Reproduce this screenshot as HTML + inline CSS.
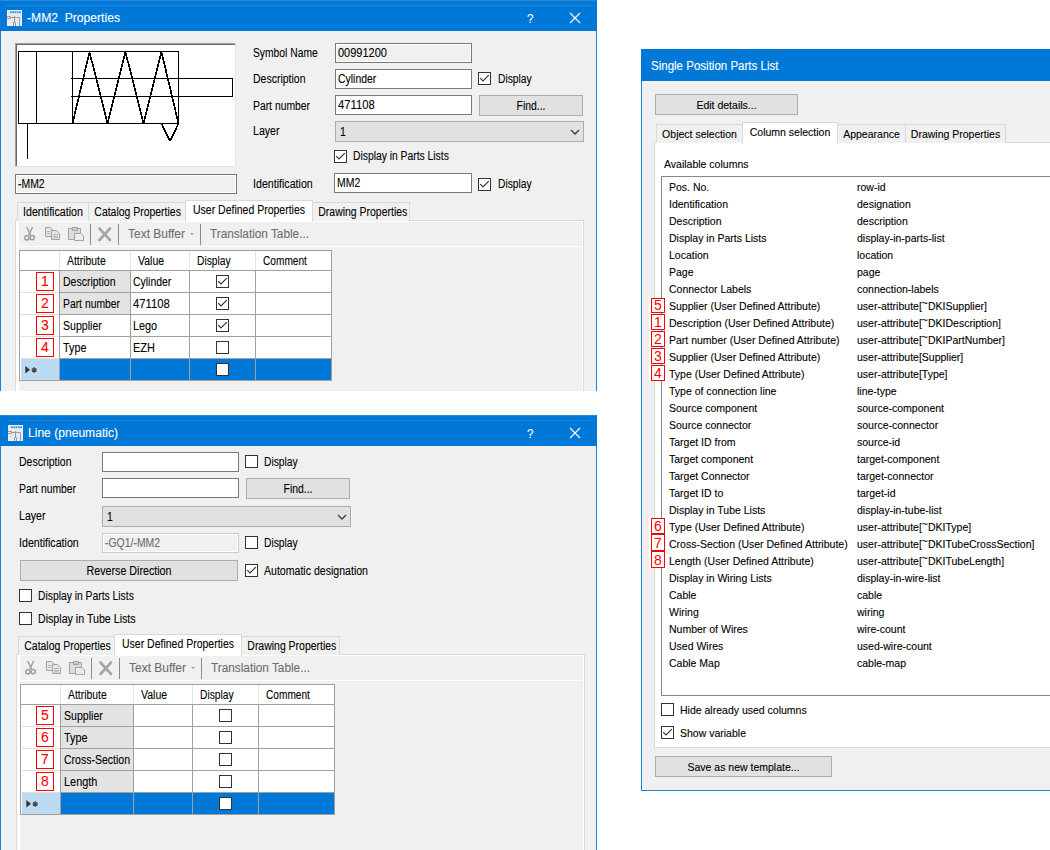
<!DOCTYPE html><html><head><meta charset="utf-8"><style>
html,body{margin:0;padding:0;}
body{width:1050px;height:850px;position:relative;overflow:hidden;background:#fff;font-family:"Liberation Sans",sans-serif;}
.t{position:absolute;white-space:nowrap;line-height:normal;-webkit-text-stroke:0.1px currentColor;}
</style></head><body>
<div style="position:absolute;left:0;top:0;width:597px;height:391px;overflow:hidden;">
<div style="position:absolute;left:0px;top:0px;width:597px;height:391px;background:#f0f0f0;"></div>
<div style="position:absolute;left:0px;top:0px;width:1px;height:391px;background:#1a82d9;"></div>
<div style="position:absolute;left:596px;top:0px;width:1px;height:391px;background:#1a82d9;"></div>
<div style="position:absolute;left:0px;top:0px;width:597px;height:31px;background:#0078d7;"></div>
<div style="position:absolute;left:1px;top:0px;width:595px;height:1px;background:#2a8ad8;"></div>
<div style="position:absolute;left:7px;top:5px;width:587px;height:1px;background:#1e88dd;"></div>
<svg style="position:absolute;left:7px;top:10px" width="15" height="16" viewBox="0 0 15 16">
<rect x="0" y="0" width="15" height="16" fill="#f2f0f4"/>
<rect x="1" y="1" width="13" height="14" fill="#e9e8ee"/>
<g fill="#2a9be0"><rect x="3" y="1.3" width="1.8" height="1.8"/><rect x="5.3" y="1.3" width="1.8" height="1.8"/><rect x="7.6" y="1.3" width="1.8" height="1.8"/><rect x="9.9" y="1.3" width="1.8" height="1.8"/><rect x="12.2" y="1.3" width="1.8" height="1.8"/></g>
<path d="M0 6.5 H3.5 V8.5 H0 M3.5 7.5 H12.5 V16 M7.5 6 V12.5 M6.5 16 V12.5 H8.5 V16" stroke="#9b9b9b" stroke-width="1" fill="none"/>
</svg>
<div class="t" style="left:27px;top:11px;font-size:12px;color:#fff;transform:scaleX(1.0105);transform-origin:0 0;">-MM2&nbsp; Properties</div>
<div class="t" style="left:527px;top:11px;font-size:13px;color:#fff;transform:scaleX(0.9000);transform-origin:0 0;">?</div>
<svg style="position:absolute;left:569px;top:12px" width="12" height="12"><path d="M1 1 L11 11 M11 1 L1 11" stroke="#fff" stroke-width="1.1"/></svg>
<div style="position:absolute;left:15px;top:43px;width:221px;height:124px;background:#fff;border-top:1px solid #a0a0a0;border-left:1px solid #a0a0a0;border-right:1px solid #e3e3e3;border-bottom:1px solid #e3e3e3;box-sizing:border-box;"></div>
<div style="position:absolute;left:16px;top:44px;width:219px;height:1px;background:#696969;"></div>
<div style="position:absolute;left:16px;top:44px;width:1px;height:122px;background:#696969;"></div>
<svg style="position:absolute;left:0;top:0" width="300" height="200">
<g stroke="#000" stroke-width="1" fill="none" shape-rendering="crispEdges">
<rect x="18.5" y="51.5" width="160" height="72"/>
<line x1="36.5" y1="51.5" x2="36.5" y2="123.5"/>
<line x1="72.5" y1="51.5" x2="72.5" y2="123.5"/>
<polyline points="71,78.5 232.5,78.5 232.5,96.5 71,96.5"/>
<line x1="27.5" y1="123.5" x2="27.5" y2="159"/>
</g>
<g stroke="#000" stroke-width="1.7" fill="none" shape-rendering="crispEdges" stroke-linejoin="bevel">
<polyline points="72.5,123.5 89.5,52 107.5,123.5 125.5,52 143.5,123.5 161.5,52 178.5,123.5"/>
<polyline points="161.5,123.5 170,141 178.5,123.5"/>
</g></svg>
<div style="position:absolute;left:15px;top:174px;width:220px;height:18px;border:1px solid #7a7a7a;background:#f0f0f0;box-shadow:inset 0 0 0 1px #fff;"></div>
<div class="t" style="left:18px;top:177px;font-size:12px;color:#000;transform:scaleX(0.8700);transform-origin:0 0;">-MM2</div>
<div class="t" style="left:253px;top:46px;font-size:12px;color:#000;transform:scaleX(0.8586);transform-origin:0 0;">Symbol Name</div>
<div class="t" style="left:253px;top:72px;font-size:12px;color:#000;transform:scaleX(0.8745);transform-origin:0 0;">Description</div>
<div class="t" style="left:253px;top:99px;font-size:12px;color:#000;transform:scaleX(0.8632);transform-origin:0 0;">Part number</div>
<div class="t" style="left:253px;top:124px;font-size:12px;color:#000;transform:scaleX(0.8824);transform-origin:0 0;">Layer</div>
<div class="t" style="left:253px;top:177px;font-size:12px;color:#000;transform:scaleX(0.8874);transform-origin:0 0;">Identification</div>
<div style="position:absolute;left:335px;top:43px;width:135px;height:18px;border:1px solid #7a7a7a;background:#f0f0f0;box-shadow:inset 0 0 0 1px #fff;"></div>
<div class="t" style="left:338px;top:46px;font-size:12px;color:#000;transform:scaleX(0.9159);transform-origin:0 0;">00991200</div>
<div style="position:absolute;left:335px;top:69px;width:135px;height:18px;border:1px solid #7a7a7a;background:#fff;"></div>
<div class="t" style="left:338px;top:72px;font-size:12px;color:#000;transform:scaleX(0.8701);transform-origin:0 0;">Cylinder</div>
<div style="position:absolute;left:478px;top:72px;width:11px;height:11px;border:1px solid #333;background:#fff;"></div>
<svg style="position:absolute;left:478px;top:72px" width="13" height="13"><polyline points="2.2,6.2 5,9 10.8,3.2" fill="none" stroke="#333" stroke-width="1.2"/></svg>
<div class="t" style="left:498px;top:72px;font-size:12px;color:#000;transform:scaleX(0.8562);transform-origin:0 0;">Display</div>
<div style="position:absolute;left:335px;top:95px;width:135px;height:18px;border:1px solid #7a7a7a;background:#fff;"></div>
<div class="t" style="left:338px;top:98px;font-size:12px;color:#000;transform:scaleX(0.9398);transform-origin:0 0;">471108</div>
<div style="position:absolute;left:479px;top:95px;width:102px;height:19px;border:1px solid #adadad;background:#e1e1e1;"></div>
<div class="t" style="left:479px;top:99px;font-size:12px;color:#000;width:104px;text-align:center;transform:scaleX(0.8663);transform-origin:50% 0;">Find...</div>
<div style="position:absolute;left:335px;top:121px;width:247px;height:19px;border:1px solid #adadad;background:#e1e1e1;"></div>
<div class="t" style="left:340px;top:125px;font-size:12px;color:#000;transform:scaleX(0.8700);transform-origin:0 0;">1</div>
<svg style="position:absolute;left:569px;top:127px" width="12" height="10"><polyline points="2,3 6,7 10,3" fill="none" stroke="#3a3a3a" stroke-width="1.25"/></svg>
<div style="position:absolute;left:334px;top:150px;width:11px;height:11px;border:1px solid #333;background:#fff;"></div>
<svg style="position:absolute;left:334px;top:150px" width="13" height="13"><polyline points="2.2,6.2 5,9 10.8,3.2" fill="none" stroke="#333" stroke-width="1.2"/></svg>
<div class="t" style="left:353px;top:149px;font-size:12px;color:#000;transform:scaleX(0.8602);transform-origin:0 0;">Display in Parts Lists</div>
<div style="position:absolute;left:334px;top:173px;width:136px;height:18px;border:1px solid #7a7a7a;background:#fff;"></div>
<div class="t" style="left:337px;top:176px;font-size:12px;color:#000;transform:scaleX(0.8700);transform-origin:0 0;">MM2</div>
<div style="position:absolute;left:478px;top:178px;width:11px;height:11px;border:1px solid #333;background:#fff;"></div>
<svg style="position:absolute;left:478px;top:178px" width="13" height="13"><polyline points="2.2,6.2 5,9 10.8,3.2" fill="none" stroke="#333" stroke-width="1.2"/></svg>
<div class="t" style="left:498px;top:177px;font-size:12px;color:#000;transform:scaleX(0.8562);transform-origin:0 0;">Display</div>
<div style="position:absolute;left:15px;top:220px;width:569px;height:200px;background:#fff;border:1px solid #d9d9d9;box-sizing:border-box;"></div>
<div style="position:absolute;left:19px;top:222px;width:563px;height:200px;background:#f0f0f0;"></div>
<div style="position:absolute;left:17px;top:202px;width:70px;height:18px;border:1px solid #d9d9d9;border-bottom:none;background:#f0f0f0;"></div>
<div class="t" style="left:17px;top:205px;font-size:12px;color:#000;width:72px;text-align:center;transform:scaleX(0.8903);transform-origin:50% 0;">Identification</div>
<div style="position:absolute;left:88px;top:202px;width:96px;height:18px;border:1px solid #d9d9d9;border-bottom:none;background:#f0f0f0;"></div>
<div class="t" style="left:88px;top:205px;font-size:12px;color:#000;width:98px;text-align:center;transform:scaleX(0.8703);transform-origin:50% 0;">Catalog Properties</div>
<div style="position:absolute;left:312px;top:202px;width:96px;height:18px;border:1px solid #d9d9d9;border-bottom:none;background:#f0f0f0;"></div>
<div class="t" style="left:312px;top:205px;font-size:12px;color:#000;width:98px;text-align:center;transform:scaleX(0.8721);transform-origin:50% 0;">Drawing Properties</div>
<div style="position:absolute;left:185px;top:200px;width:126px;height:21px;border:1px solid #d9d9d9;border-bottom:none;background:#fff;"></div>
<div class="t" style="left:185px;top:203px;font-size:12px;color:#000;width:128px;text-align:center;transform:scaleX(0.8746);transform-origin:50% 0;">User Defined Properties</div>
<div style="position:absolute;left:19px;top:246px;width:563px;height:1px;background:#fff;"></div>
<svg style="position:absolute;left:19px;top:222px" width="300" height="24">
<g fill="none" stroke="#9c9c9c" stroke-width="1.4">
<path d="M7.6 5 L11.6 13.2 M13.6 5 L9.6 13.2"/>
</g>
<circle cx="7.9" cy="15.8" r="2.1" fill="#f4f4f4" stroke="#9c9c9c" stroke-width="1.5"/>
<circle cx="13.2" cy="15.6" r="2.1" fill="#f4f4f4" stroke="#9c9c9c" stroke-width="1.5"/>
<g fill="#e6e6e6" stroke="#a3a3a3" stroke-width="1">
<path d="M26.5 5.5 H31.5 L34 8 V14.5 H26.5 Z"/>
<path d="M32.5 8.5 H37.5 L40.5 11.5 V17.5 H32.5 Z"/>
</g>
<g stroke="#b5b5b5" stroke-width="1"><path d="M28 9.5 H31 M28 11.5 H31 M34 12.5 H39 M34 14.5 H39 M34 16 H39"/></g>
<g fill="#dcdcdc" stroke="#a3a3a3" stroke-width="1">
<path d="M49.5 6.5 H61.5 V17.5 H49.5 Z"/>
<path d="M53.5 5.5 H58.5 V8.5 H53.5 Z" fill="#cfcfcf"/>
<path d="M55.5 11.5 H62 L64.5 14 V18.5 H55.5 Z" fill="#ececec"/>
</g>
<rect x="71" y="2" width="1" height="21" fill="#8c8c8c"/>
<path d="M80.5 6.5 L91 18 M91 6.5 L80.5 18" stroke="#a6a6a6" stroke-width="2.6" stroke-linecap="round"/>
<rect x="99" y="2" width="1" height="21" fill="#8c8c8c"/>
<path d="M171 11 L175 11 L173 13 Z" fill="#999"/>
<rect x="181" y="2" width="1" height="21" fill="#8c8c8c"/>
</svg>
<div class="t" style="left:128px;top:227px;font-size:12px;color:#6d6d6d;transform:scaleX(0.9975);transform-origin:0 0;">Text Buffer</div>
<div class="t" style="left:210px;top:227px;font-size:12px;color:#6d6d6d;transform:scaleX(0.9828);transform-origin:0 0;">Translation Table...</div>
<div style="position:absolute;left:19px;top:250px;width:313px;height:131px;background:#fff;border:1px solid #a0a0a0;box-sizing:border-box;"></div>
<div class="t" style="left:67px;top:254px;font-size:12px;color:#000;transform:scaleX(0.8657);transform-origin:0 0;">Attribute</div>
<div class="t" style="left:138px;top:254px;font-size:12px;color:#000;transform:scaleX(0.8755);transform-origin:0 0;">Value</div>
<div class="t" style="left:197px;top:254px;font-size:12px;color:#000;transform:scaleX(0.8562);transform-origin:0 0;">Display</div>
<div class="t" style="left:263px;top:254px;font-size:12px;color:#000;transform:scaleX(0.8440);transform-origin:0 0;">Comment</div>
<div style="position:absolute;left:59px;top:251px;width:1px;height:19px;background:#e5e5e5;"></div>
<div style="position:absolute;left:59px;top:270px;width:1px;height:111px;background:#a0a0a0;"></div>
<div style="position:absolute;left:130px;top:251px;width:1px;height:19px;background:#e5e5e5;"></div>
<div style="position:absolute;left:130px;top:270px;width:1px;height:111px;background:#a0a0a0;"></div>
<div style="position:absolute;left:189px;top:251px;width:1px;height:19px;background:#e5e5e5;"></div>
<div style="position:absolute;left:189px;top:270px;width:1px;height:111px;background:#a0a0a0;"></div>
<div style="position:absolute;left:255px;top:251px;width:1px;height:19px;background:#e5e5e5;"></div>
<div style="position:absolute;left:255px;top:270px;width:1px;height:111px;background:#a0a0a0;"></div>
<div style="position:absolute;left:19px;top:270px;width:313px;height:1px;background:#a0a0a0;"></div>
<div style="position:absolute;left:21px;top:292px;width:38px;height:1px;background:#e0e0e0;"></div>
<div style="position:absolute;left:59px;top:292px;width:273px;height:1px;background:#a0a0a0;"></div>
<div style="position:absolute;left:21px;top:314px;width:38px;height:1px;background:#e0e0e0;"></div>
<div style="position:absolute;left:59px;top:314px;width:273px;height:1px;background:#a0a0a0;"></div>
<div style="position:absolute;left:21px;top:336px;width:38px;height:1px;background:#e0e0e0;"></div>
<div style="position:absolute;left:59px;top:336px;width:273px;height:1px;background:#a0a0a0;"></div>
<div style="position:absolute;left:21px;top:358px;width:38px;height:1px;background:#e0e0e0;"></div>
<div style="position:absolute;left:59px;top:358px;width:273px;height:1px;background:#a0a0a0;"></div>
<div style="position:absolute;left:60px;top:271px;width:70px;height:21px;background:#e3e3e3;"></div>
<div style="position:absolute;left:36px;top:272px;width:16px;height:17px;border:1px solid #f00;"></div>
<div class="t" style="left:36px;top:272px;width:18px;height:19px;line-height:19px;text-align:center;font-size:14px;color:#f00;">1</div>
<div class="t" style="left:63px;top:275px;font-size:12px;color:#000;transform:scaleX(0.8745);transform-origin:0 0;">Description</div>
<div class="t" style="left:133px;top:275px;font-size:12px;color:#000;transform:scaleX(0.8701);transform-origin:0 0;">Cylinder</div>
<div style="position:absolute;left:216px;top:275px;width:11px;height:11px;border:1px solid #333;background:#fff;"></div>
<svg style="position:absolute;left:216px;top:275px" width="13" height="13"><polyline points="2.2,6.2 5,9 10.8,3.2" fill="none" stroke="#333" stroke-width="1.2"/></svg>
<div style="position:absolute;left:60px;top:293px;width:70px;height:21px;background:#e3e3e3;"></div>
<div style="position:absolute;left:36px;top:294px;width:16px;height:17px;border:1px solid #f00;"></div>
<div class="t" style="left:36px;top:294px;width:18px;height:19px;line-height:19px;text-align:center;font-size:14px;color:#f00;">2</div>
<div class="t" style="left:63px;top:297px;font-size:12px;color:#000;transform:scaleX(0.8632);transform-origin:0 0;">Part number</div>
<div class="t" style="left:133px;top:297px;font-size:12px;color:#000;transform:scaleX(0.9398);transform-origin:0 0;">471108</div>
<div style="position:absolute;left:216px;top:297px;width:11px;height:11px;border:1px solid #333;background:#fff;"></div>
<svg style="position:absolute;left:216px;top:297px" width="13" height="13"><polyline points="2.2,6.2 5,9 10.8,3.2" fill="none" stroke="#333" stroke-width="1.2"/></svg>
<div style="position:absolute;left:36px;top:316px;width:16px;height:17px;border:1px solid #f00;"></div>
<div class="t" style="left:36px;top:316px;width:18px;height:19px;line-height:19px;text-align:center;font-size:14px;color:#f00;">3</div>
<div class="t" style="left:63px;top:319px;font-size:12px;color:#000;transform:scaleX(0.8812);transform-origin:0 0;">Supplier</div>
<div class="t" style="left:133px;top:319px;font-size:12px;color:#000;transform:scaleX(0.9025);transform-origin:0 0;">Lego</div>
<div style="position:absolute;left:216px;top:319px;width:11px;height:11px;border:1px solid #333;background:#fff;"></div>
<svg style="position:absolute;left:216px;top:319px" width="13" height="13"><polyline points="2.2,6.2 5,9 10.8,3.2" fill="none" stroke="#333" stroke-width="1.2"/></svg>
<div style="position:absolute;left:36px;top:338px;width:16px;height:17px;border:1px solid #f00;"></div>
<div class="t" style="left:36px;top:338px;width:18px;height:19px;line-height:19px;text-align:center;font-size:14px;color:#f00;">4</div>
<div class="t" style="left:63px;top:341px;font-size:12px;color:#000;transform:scaleX(0.8995);transform-origin:0 0;">Type</div>
<div class="t" style="left:133px;top:341px;font-size:12px;color:#000;transform:scaleX(0.9125);transform-origin:0 0;">EZH</div>
<div style="position:absolute;left:216px;top:341px;width:11px;height:11px;border:1px solid #333;background:#fff;"></div>
<div style="position:absolute;left:21px;top:359px;width:38px;height:21px;background:#bcdaf2;"></div>
<div style="position:absolute;left:60px;top:359px;width:271px;height:21px;background:#0078d7;"></div>
<div style="position:absolute;left:130px;top:359px;width:1px;height:21px;background:#a0a0a0;"></div>
<div style="position:absolute;left:189px;top:359px;width:1px;height:21px;background:#a0a0a0;"></div>
<div style="position:absolute;left:255px;top:359px;width:1px;height:21px;background:#a0a0a0;"></div>
<div style="position:absolute;left:216px;top:363px;width:11px;height:11px;border:1px solid #333;background:#fff;"></div>
<svg style="position:absolute;left:25px;top:366px" width="14" height="9"><path d="M0.3 0 L5 3.8 L0.3 7.6 Z" fill="#333"/><path d="M9.2 1.2 V6.8 M6.8 2.6 L11.6 5.4 M11.6 2.6 L6.8 5.4" stroke="#444" stroke-width="1.4"/></svg>
</div>
<div style="position:absolute;left:0;top:415px;width:597px;height:435px;overflow:hidden;">
</div>
<div style="position:absolute;left:0px;top:415px;width:597px;height:435px;background:#f0f0f0;"></div>
<div style="position:absolute;left:0px;top:415px;width:1px;height:435px;background:#1a82d9;"></div>
<div style="position:absolute;left:596px;top:415px;width:1px;height:435px;background:#1a82d9;"></div>
<div style="position:absolute;left:0px;top:415px;width:597px;height:31px;background:#0078d7;"></div>
<div style="position:absolute;left:1px;top:415px;width:595px;height:1px;background:#2a8ad8;"></div>
<div style="position:absolute;left:8px;top:420px;width:586px;height:1px;background:#1e88dd;"></div>
<svg style="position:absolute;left:8px;top:425px" width="15" height="16" viewBox="0 0 15 16">
<rect x="0" y="0" width="15" height="16" fill="#f2f0f4"/>
<rect x="1" y="1" width="13" height="14" fill="#e9e8ee"/>
<g fill="#2a9be0"><rect x="3" y="1.3" width="1.8" height="1.8"/><rect x="5.3" y="1.3" width="1.8" height="1.8"/><rect x="7.6" y="1.3" width="1.8" height="1.8"/><rect x="9.9" y="1.3" width="1.8" height="1.8"/><rect x="12.2" y="1.3" width="1.8" height="1.8"/></g>
<path d="M0 6.5 H3.5 V8.5 H0 M3.5 7.5 H12.5 V16 M7.5 6 V12.5 M6.5 16 V12.5 H8.5 V16" stroke="#9b9b9b" stroke-width="1" fill="none"/>
</svg>
<div class="t" style="left:28px;top:426px;font-size:12px;color:#fff;transform:scaleX(1.0068);transform-origin:0 0;">Line (pneumatic)</div>
<div class="t" style="left:527px;top:426px;font-size:13px;color:#fff;transform:scaleX(0.9000);transform-origin:0 0;">?</div>
<svg style="position:absolute;left:569px;top:427px" width="12" height="12"><path d="M1 1 L11 11 M11 1 L1 11" stroke="#fff" stroke-width="1.1"/></svg>
<div class="t" style="left:19px;top:455px;font-size:12px;color:#000;transform:scaleX(0.8745);transform-origin:0 0;">Description</div>
<div class="t" style="left:19px;top:482px;font-size:12px;color:#000;transform:scaleX(0.8632);transform-origin:0 0;">Part number</div>
<div class="t" style="left:19px;top:509px;font-size:12px;color:#000;transform:scaleX(0.8824);transform-origin:0 0;">Layer</div>
<div class="t" style="left:19px;top:536px;font-size:12px;color:#000;transform:scaleX(0.8874);transform-origin:0 0;">Identification</div>
<div style="position:absolute;left:102px;top:452px;width:135px;height:18px;border:1px solid #7a7a7a;background:#fff;"></div>
<div style="position:absolute;left:245px;top:455px;width:11px;height:11px;border:1px solid #333;background:#fff;"></div>
<div class="t" style="left:264px;top:455px;font-size:12px;color:#000;transform:scaleX(0.8562);transform-origin:0 0;">Display</div>
<div style="position:absolute;left:102px;top:478px;width:135px;height:18px;border:1px solid #7a7a7a;background:#fff;"></div>
<div style="position:absolute;left:246px;top:478px;width:102px;height:19px;border:1px solid #adadad;background:#e1e1e1;"></div>
<div class="t" style="left:246px;top:482px;font-size:12px;color:#000;width:104px;text-align:center;transform:scaleX(0.8663);transform-origin:50% 0;">Find...</div>
<div style="position:absolute;left:102px;top:506px;width:247px;height:19px;border:1px solid #adadad;background:#e1e1e1;"></div>
<div class="t" style="left:107px;top:510px;font-size:12px;color:#000;transform:scaleX(0.8700);transform-origin:0 0;">1</div>
<svg style="position:absolute;left:336px;top:512px" width="12" height="10"><polyline points="2,3 6,7 10,3" fill="none" stroke="#3a3a3a" stroke-width="1.25"/></svg>
<div style="position:absolute;left:102px;top:533px;width:135px;height:18px;border:1px solid #cccccc;background:#f0f0f0;box-shadow:inset 0 0 0 1px #fff;"></div>
<div class="t" style="left:105px;top:536px;font-size:12px;color:#6d6d6d;transform:scaleX(0.8700);transform-origin:0 0;">-GQ1/-MM2</div>
<div style="position:absolute;left:245px;top:536px;width:11px;height:11px;border:1px solid #333;background:#fff;"></div>
<div class="t" style="left:264px;top:536px;font-size:12px;color:#000;transform:scaleX(0.8562);transform-origin:0 0;">Display</div>
<div style="position:absolute;left:20px;top:560px;width:216px;height:19px;border:1px solid #adadad;background:#e1e1e1;"></div>
<div class="t" style="left:20px;top:564px;font-size:12px;color:#000;width:218px;text-align:center;transform:scaleX(0.8912);transform-origin:50% 0;">Reverse Direction</div>
<div style="position:absolute;left:245px;top:564px;width:11px;height:11px;border:1px solid #333;background:#fff;"></div>
<svg style="position:absolute;left:245px;top:564px" width="13" height="13"><polyline points="2.2,6.2 5,9 10.8,3.2" fill="none" stroke="#333" stroke-width="1.2"/></svg>
<div class="t" style="left:264px;top:564px;font-size:12px;color:#000;transform:scaleX(0.8808);transform-origin:0 0;">Automatic designation</div>
<div style="position:absolute;left:19px;top:589px;width:11px;height:11px;border:1px solid #333;background:#fff;"></div>
<div class="t" style="left:38px;top:589px;font-size:12px;color:#000;transform:scaleX(0.8602);transform-origin:0 0;">Display in Parts Lists</div>
<div style="position:absolute;left:19px;top:612px;width:11px;height:11px;border:1px solid #333;background:#fff;"></div>
<div class="t" style="left:38px;top:612px;font-size:12px;color:#000;transform:scaleX(0.8868);transform-origin:0 0;">Display in Tube Lists</div>
<div style="position:absolute;left:16px;top:654px;width:569px;height:200px;background:#fff;border:1px solid #d9d9d9;box-sizing:border-box;"></div>
<div style="position:absolute;left:20px;top:656px;width:563px;height:200px;background:#f0f0f0;"></div>
<div style="position:absolute;left:18px;top:636px;width:95px;height:18px;border:1px solid #d9d9d9;border-bottom:none;background:#f0f0f0;"></div>
<div class="t" style="left:18px;top:639px;font-size:12px;color:#000;width:97px;text-align:center;transform:scaleX(0.8703);transform-origin:50% 0;">Catalog Properties</div>
<div style="position:absolute;left:241px;top:636px;width:97px;height:18px;border:1px solid #d9d9d9;border-bottom:none;background:#f0f0f0;"></div>
<div class="t" style="left:241px;top:639px;font-size:12px;color:#000;width:99px;text-align:center;transform:scaleX(0.8721);transform-origin:50% 0;">Drawing Properties</div>
<div style="position:absolute;left:114px;top:634px;width:126px;height:21px;border:1px solid #d9d9d9;border-bottom:none;background:#fff;"></div>
<div class="t" style="left:114px;top:637px;font-size:12px;color:#000;width:128px;text-align:center;transform:scaleX(0.8746);transform-origin:50% 0;">User Defined Properties</div>
<div style="position:absolute;left:20px;top:680px;width:563px;height:1px;background:#fff;"></div>
<svg style="position:absolute;left:20px;top:656px" width="300" height="24">
<g fill="none" stroke="#9c9c9c" stroke-width="1.4">
<path d="M7.6 5 L11.6 13.2 M13.6 5 L9.6 13.2"/>
</g>
<circle cx="7.9" cy="15.8" r="2.1" fill="#f4f4f4" stroke="#9c9c9c" stroke-width="1.5"/>
<circle cx="13.2" cy="15.6" r="2.1" fill="#f4f4f4" stroke="#9c9c9c" stroke-width="1.5"/>
<g fill="#e6e6e6" stroke="#a3a3a3" stroke-width="1">
<path d="M26.5 5.5 H31.5 L34 8 V14.5 H26.5 Z"/>
<path d="M32.5 8.5 H37.5 L40.5 11.5 V17.5 H32.5 Z"/>
</g>
<g stroke="#b5b5b5" stroke-width="1"><path d="M28 9.5 H31 M28 11.5 H31 M34 12.5 H39 M34 14.5 H39 M34 16 H39"/></g>
<g fill="#dcdcdc" stroke="#a3a3a3" stroke-width="1">
<path d="M49.5 6.5 H61.5 V17.5 H49.5 Z"/>
<path d="M53.5 5.5 H58.5 V8.5 H53.5 Z" fill="#cfcfcf"/>
<path d="M55.5 11.5 H62 L64.5 14 V18.5 H55.5 Z" fill="#ececec"/>
</g>
<rect x="71" y="2" width="1" height="21" fill="#8c8c8c"/>
<path d="M80.5 6.5 L91 18 M91 6.5 L80.5 18" stroke="#a6a6a6" stroke-width="2.6" stroke-linecap="round"/>
<rect x="99" y="2" width="1" height="21" fill="#8c8c8c"/>
<path d="M171 11 L175 11 L173 13 Z" fill="#999"/>
<rect x="181" y="2" width="1" height="21" fill="#8c8c8c"/>
</svg>
<div class="t" style="left:129px;top:661px;font-size:12px;color:#6d6d6d;transform:scaleX(0.9975);transform-origin:0 0;">Text Buffer</div>
<div class="t" style="left:211px;top:661px;font-size:12px;color:#6d6d6d;transform:scaleX(0.9828);transform-origin:0 0;">Translation Table...</div>
<div style="position:absolute;left:20px;top:684px;width:315px;height:131px;background:#fff;border:1px solid #a0a0a0;box-sizing:border-box;"></div>
<div class="t" style="left:68px;top:688px;font-size:12px;color:#000;transform:scaleX(0.8657);transform-origin:0 0;">Attribute</div>
<div class="t" style="left:141px;top:688px;font-size:12px;color:#000;transform:scaleX(0.8755);transform-origin:0 0;">Value</div>
<div class="t" style="left:200px;top:688px;font-size:12px;color:#000;transform:scaleX(0.8562);transform-origin:0 0;">Display</div>
<div class="t" style="left:266px;top:688px;font-size:12px;color:#000;transform:scaleX(0.8440);transform-origin:0 0;">Comment</div>
<div style="position:absolute;left:60px;top:685px;width:1px;height:19px;background:#e5e5e5;"></div>
<div style="position:absolute;left:60px;top:704px;width:1px;height:111px;background:#a0a0a0;"></div>
<div style="position:absolute;left:133px;top:685px;width:1px;height:19px;background:#e5e5e5;"></div>
<div style="position:absolute;left:133px;top:704px;width:1px;height:111px;background:#a0a0a0;"></div>
<div style="position:absolute;left:192px;top:685px;width:1px;height:19px;background:#e5e5e5;"></div>
<div style="position:absolute;left:192px;top:704px;width:1px;height:111px;background:#a0a0a0;"></div>
<div style="position:absolute;left:258px;top:685px;width:1px;height:19px;background:#e5e5e5;"></div>
<div style="position:absolute;left:258px;top:704px;width:1px;height:111px;background:#a0a0a0;"></div>
<div style="position:absolute;left:20px;top:704px;width:315px;height:1px;background:#a0a0a0;"></div>
<div style="position:absolute;left:22px;top:726px;width:38px;height:1px;background:#e0e0e0;"></div>
<div style="position:absolute;left:60px;top:726px;width:275px;height:1px;background:#a0a0a0;"></div>
<div style="position:absolute;left:22px;top:748px;width:38px;height:1px;background:#e0e0e0;"></div>
<div style="position:absolute;left:60px;top:748px;width:275px;height:1px;background:#a0a0a0;"></div>
<div style="position:absolute;left:22px;top:770px;width:38px;height:1px;background:#e0e0e0;"></div>
<div style="position:absolute;left:60px;top:770px;width:275px;height:1px;background:#a0a0a0;"></div>
<div style="position:absolute;left:22px;top:792px;width:38px;height:1px;background:#e0e0e0;"></div>
<div style="position:absolute;left:60px;top:792px;width:275px;height:1px;background:#a0a0a0;"></div>
<div style="position:absolute;left:61px;top:705px;width:72px;height:21px;background:#e3e3e3;"></div>
<div style="position:absolute;left:36px;top:706px;width:16px;height:17px;border:1px solid #f00;"></div>
<div class="t" style="left:36px;top:706px;width:18px;height:19px;line-height:19px;text-align:center;font-size:14px;color:#f00;">5</div>
<div class="t" style="left:64px;top:709px;font-size:12px;color:#000;transform:scaleX(0.8812);transform-origin:0 0;">Supplier</div>
<div class="t" style="left:136px;top:709px;font-size:12px;color:#000;transform:scaleX(0.8700);transform-origin:0 0;"></div>
<div style="position:absolute;left:219px;top:709px;width:11px;height:11px;border:1px solid #333;background:#fff;"></div>
<div style="position:absolute;left:61px;top:727px;width:72px;height:21px;background:#e3e3e3;"></div>
<div style="position:absolute;left:36px;top:728px;width:16px;height:17px;border:1px solid #f00;"></div>
<div class="t" style="left:36px;top:728px;width:18px;height:19px;line-height:19px;text-align:center;font-size:14px;color:#f00;">6</div>
<div class="t" style="left:64px;top:731px;font-size:12px;color:#000;transform:scaleX(0.8995);transform-origin:0 0;">Type</div>
<div class="t" style="left:136px;top:731px;font-size:12px;color:#000;transform:scaleX(0.8700);transform-origin:0 0;"></div>
<div style="position:absolute;left:219px;top:731px;width:11px;height:11px;border:1px solid #333;background:#fff;"></div>
<div style="position:absolute;left:61px;top:749px;width:72px;height:21px;background:#e3e3e3;"></div>
<div style="position:absolute;left:36px;top:750px;width:16px;height:17px;border:1px solid #f00;"></div>
<div class="t" style="left:36px;top:750px;width:18px;height:19px;line-height:19px;text-align:center;font-size:14px;color:#f00;">7</div>
<div class="t" style="left:64px;top:753px;font-size:12px;color:#000;transform:scaleX(0.8758);transform-origin:0 0;">Cross-Section</div>
<div class="t" style="left:136px;top:753px;font-size:12px;color:#000;transform:scaleX(0.8700);transform-origin:0 0;"></div>
<div style="position:absolute;left:219px;top:753px;width:11px;height:11px;border:1px solid #333;background:#fff;"></div>
<div style="position:absolute;left:61px;top:771px;width:72px;height:21px;background:#e3e3e3;"></div>
<div style="position:absolute;left:36px;top:772px;width:16px;height:17px;border:1px solid #f00;"></div>
<div class="t" style="left:36px;top:772px;width:18px;height:19px;line-height:19px;text-align:center;font-size:14px;color:#f00;">8</div>
<div class="t" style="left:64px;top:775px;font-size:12px;color:#000;transform:scaleX(0.9100);transform-origin:0 0;">Length</div>
<div class="t" style="left:136px;top:775px;font-size:12px;color:#000;transform:scaleX(0.8700);transform-origin:0 0;"></div>
<div style="position:absolute;left:219px;top:775px;width:11px;height:11px;border:1px solid #333;background:#fff;"></div>
<div style="position:absolute;left:22px;top:793px;width:38px;height:21px;background:#bcdaf2;"></div>
<div style="position:absolute;left:61px;top:793px;width:273px;height:21px;background:#0078d7;"></div>
<div style="position:absolute;left:133px;top:793px;width:1px;height:21px;background:#a0a0a0;"></div>
<div style="position:absolute;left:192px;top:793px;width:1px;height:21px;background:#a0a0a0;"></div>
<div style="position:absolute;left:258px;top:793px;width:1px;height:21px;background:#a0a0a0;"></div>
<div style="position:absolute;left:219px;top:797px;width:11px;height:11px;border:1px solid #333;background:#fff;"></div>
<svg style="position:absolute;left:26px;top:800px" width="14" height="9"><path d="M0.3 0 L5 3.8 L0.3 7.6 Z" fill="#333"/><path d="M9.2 1.2 V6.8 M6.8 2.6 L11.6 5.4 M11.6 2.6 L6.8 5.4" stroke="#444" stroke-width="1.4"/></svg>
<div style="position:absolute;left:641px;top:49px;width:409px;height:742px;background:#f0f0f0;"></div>
<div style="position:absolute;left:641px;top:49px;width:1px;height:742px;background:#1a82d9;"></div>
<div style="position:absolute;left:641px;top:790px;width:409px;height:1px;background:#1a82d9;"></div>
<div style="position:absolute;left:641px;top:49px;width:409px;height:32px;background:#0078d7;"></div>
<div class="t" style="left:651px;top:59px;font-size:12px;color:#fff;transform:scaleX(0.9600);transform-origin:0 0;">Single Position Parts List</div>
<div style="position:absolute;left:655px;top:94px;width:141px;height:19px;border:1px solid #adadad;background:#e1e1e1;"></div>
<div class="t" style="left:655px;top:99px;font-size:11px;color:#000;width:143px;text-align:center;transform:scaleX(0.9550);transform-origin:50% 0;">Edit details...</div>
<div style="position:absolute;left:654px;top:142px;width:500px;height:606px;background:#fff;border:1px solid #d9d9d9;box-sizing:border-box;"></div>
<div style="position:absolute;left:656px;top:124px;width:85px;height:18px;border:1px solid #d9d9d9;border-bottom:none;background:#f0f0f0;"></div>
<div class="t" style="left:656px;top:128px;font-size:11px;color:#000;width:87px;text-align:center;transform:scaleX(0.9550);transform-origin:50% 0;">Object selection</div>
<div style="position:absolute;left:837px;top:124px;width:67px;height:18px;border:1px solid #d9d9d9;border-bottom:none;background:#f0f0f0;"></div>
<div class="t" style="left:837px;top:128px;font-size:11px;color:#000;width:69px;text-align:center;transform:scaleX(0.9550);transform-origin:50% 0;">Appearance</div>
<div style="position:absolute;left:905px;top:124px;width:99px;height:18px;border:1px solid #d9d9d9;border-bottom:none;background:#f0f0f0;"></div>
<div class="t" style="left:905px;top:128px;font-size:11px;color:#000;width:101px;text-align:center;transform:scaleX(0.9550);transform-origin:50% 0;">Drawing Properties</div>
<div style="position:absolute;left:742px;top:122px;width:94px;height:21px;border:1px solid #d9d9d9;border-bottom:none;background:#fff;"></div>
<div class="t" style="left:742px;top:126px;font-size:11px;color:#000;width:96px;text-align:center;transform:scaleX(0.9550);transform-origin:50% 0;">Column selection</div>
<div class="t" style="left:664px;top:158px;font-size:11px;color:#000;transform:scaleX(0.9550);transform-origin:0 0;">Available columns</div>
<div style="position:absolute;left:661px;top:176px;width:500px;height:520px;background:#fff;border:1px solid #828790;box-sizing:border-box;"></div>
<div class="t" style="left:669px;top:181px;font-size:11px;color:#000;transform:scaleX(0.9550);transform-origin:0 0;">Pos. No.</div>
<div class="t" style="left:857px;top:181px;font-size:11px;color:#000;transform:scaleX(0.9550);transform-origin:0 0;">row-id</div>
<div class="t" style="left:669px;top:198px;font-size:11px;color:#000;transform:scaleX(0.9550);transform-origin:0 0;">Identification</div>
<div class="t" style="left:857px;top:198px;font-size:11px;color:#000;transform:scaleX(0.9550);transform-origin:0 0;">designation</div>
<div class="t" style="left:669px;top:215px;font-size:11px;color:#000;transform:scaleX(0.9550);transform-origin:0 0;">Description</div>
<div class="t" style="left:857px;top:215px;font-size:11px;color:#000;transform:scaleX(0.9550);transform-origin:0 0;">description</div>
<div class="t" style="left:669px;top:232px;font-size:11px;color:#000;transform:scaleX(0.9550);transform-origin:0 0;">Display in Parts Lists</div>
<div class="t" style="left:857px;top:232px;font-size:11px;color:#000;transform:scaleX(0.9550);transform-origin:0 0;">display-in-parts-list</div>
<div class="t" style="left:669px;top:249px;font-size:11px;color:#000;transform:scaleX(0.9550);transform-origin:0 0;">Location</div>
<div class="t" style="left:857px;top:249px;font-size:11px;color:#000;transform:scaleX(0.9550);transform-origin:0 0;">location</div>
<div class="t" style="left:669px;top:266px;font-size:11px;color:#000;transform:scaleX(0.9550);transform-origin:0 0;">Page</div>
<div class="t" style="left:857px;top:266px;font-size:11px;color:#000;transform:scaleX(0.9550);transform-origin:0 0;">page</div>
<div class="t" style="left:669px;top:283px;font-size:11px;color:#000;transform:scaleX(0.9550);transform-origin:0 0;">Connector Labels</div>
<div class="t" style="left:857px;top:283px;font-size:11px;color:#000;transform:scaleX(0.9550);transform-origin:0 0;">connection-labels</div>
<div class="t" style="left:669px;top:300px;font-size:11px;color:#000;transform:scaleX(0.9550);transform-origin:0 0;">Supplier (User Defined Attribute)</div>
<div class="t" style="left:857px;top:300px;font-size:11px;color:#000;transform:scaleX(0.9550);transform-origin:0 0;">user-attribute[<span style="position:relative;top:-3px">~</span>DKISupplier]</div>
<div style="position:absolute;left:649px;top:298px;width:2px;height:15px;background:#fff;"></div>
<div style="position:absolute;left:651px;top:298px;width:12px;height:13px;border:1px solid #f00;background:#fff;"></div>
<div style="position:absolute;left:651px;top:297px;width:14px;height:16px;line-height:16px;text-align:center;font-size:14px;color:#f00;white-space:nowrap;">5</div>
<div class="t" style="left:669px;top:317px;font-size:11px;color:#000;transform:scaleX(0.9550);transform-origin:0 0;">Description (User Defined Attribute)</div>
<div class="t" style="left:857px;top:317px;font-size:11px;color:#000;transform:scaleX(0.9550);transform-origin:0 0;">user-attribute[<span style="position:relative;top:-3px">~</span>DKIDescription]</div>
<div style="position:absolute;left:649px;top:314px;width:2px;height:16px;background:#fff;"></div>
<div style="position:absolute;left:651px;top:314px;width:12px;height:14px;border:1px solid #f00;background:#fff;"></div>
<div style="position:absolute;left:651px;top:314px;width:14px;height:16px;line-height:16px;text-align:center;font-size:14px;color:#f00;white-space:nowrap;">1</div>
<div class="t" style="left:669px;top:334px;font-size:11px;color:#000;transform:scaleX(0.9550);transform-origin:0 0;">Part number (User Defined Attribute)</div>
<div class="t" style="left:857px;top:334px;font-size:11px;color:#000;transform:scaleX(0.9550);transform-origin:0 0;">user-attribute[<span style="position:relative;top:-3px">~</span>DKIPartNumber]</div>
<div style="position:absolute;left:649px;top:331px;width:2px;height:16px;background:#fff;"></div>
<div style="position:absolute;left:651px;top:331px;width:12px;height:14px;border:1px solid #f00;background:#fff;"></div>
<div style="position:absolute;left:651px;top:331px;width:14px;height:16px;line-height:16px;text-align:center;font-size:14px;color:#f00;white-space:nowrap;">2</div>
<div class="t" style="left:669px;top:351px;font-size:11px;color:#000;transform:scaleX(0.9550);transform-origin:0 0;">Supplier (User Defined Attribute)</div>
<div class="t" style="left:857px;top:351px;font-size:11px;color:#000;transform:scaleX(0.9550);transform-origin:0 0;">user-attribute[Supplier]</div>
<div style="position:absolute;left:649px;top:348px;width:2px;height:16px;background:#fff;"></div>
<div style="position:absolute;left:651px;top:348px;width:12px;height:14px;border:1px solid #f00;background:#fff;"></div>
<div style="position:absolute;left:651px;top:348px;width:14px;height:16px;line-height:16px;text-align:center;font-size:14px;color:#f00;white-space:nowrap;">3</div>
<div class="t" style="left:669px;top:368px;font-size:11px;color:#000;transform:scaleX(0.9550);transform-origin:0 0;">Type (User Defined Attribute)</div>
<div class="t" style="left:857px;top:368px;font-size:11px;color:#000;transform:scaleX(0.9550);transform-origin:0 0;">user-attribute[Type]</div>
<div style="position:absolute;left:649px;top:365px;width:2px;height:16px;background:#fff;"></div>
<div style="position:absolute;left:651px;top:365px;width:12px;height:14px;border:1px solid #f00;background:#fff;"></div>
<div style="position:absolute;left:651px;top:365px;width:14px;height:16px;line-height:16px;text-align:center;font-size:14px;color:#f00;white-space:nowrap;">4</div>
<div class="t" style="left:669px;top:385px;font-size:11px;color:#000;transform:scaleX(0.9550);transform-origin:0 0;">Type of connection line</div>
<div class="t" style="left:857px;top:385px;font-size:11px;color:#000;transform:scaleX(0.9550);transform-origin:0 0;">line-type</div>
<div class="t" style="left:669px;top:402px;font-size:11px;color:#000;transform:scaleX(0.9550);transform-origin:0 0;">Source component</div>
<div class="t" style="left:857px;top:402px;font-size:11px;color:#000;transform:scaleX(0.9550);transform-origin:0 0;">source-component</div>
<div class="t" style="left:669px;top:419px;font-size:11px;color:#000;transform:scaleX(0.9550);transform-origin:0 0;">Source connector</div>
<div class="t" style="left:857px;top:419px;font-size:11px;color:#000;transform:scaleX(0.9550);transform-origin:0 0;">source-connector</div>
<div class="t" style="left:669px;top:436px;font-size:11px;color:#000;transform:scaleX(0.9550);transform-origin:0 0;">Target ID from</div>
<div class="t" style="left:857px;top:436px;font-size:11px;color:#000;transform:scaleX(0.9550);transform-origin:0 0;">source-id</div>
<div class="t" style="left:669px;top:453px;font-size:11px;color:#000;transform:scaleX(0.9550);transform-origin:0 0;">Target component</div>
<div class="t" style="left:857px;top:453px;font-size:11px;color:#000;transform:scaleX(0.9550);transform-origin:0 0;">target-component</div>
<div class="t" style="left:669px;top:470px;font-size:11px;color:#000;transform:scaleX(0.9550);transform-origin:0 0;">Target Connector</div>
<div class="t" style="left:857px;top:470px;font-size:11px;color:#000;transform:scaleX(0.9550);transform-origin:0 0;">target-connector</div>
<div class="t" style="left:669px;top:487px;font-size:11px;color:#000;transform:scaleX(0.9550);transform-origin:0 0;">Target ID to</div>
<div class="t" style="left:857px;top:487px;font-size:11px;color:#000;transform:scaleX(0.9550);transform-origin:0 0;">target-id</div>
<div class="t" style="left:669px;top:504px;font-size:11px;color:#000;transform:scaleX(0.9550);transform-origin:0 0;">Display in Tube Lists</div>
<div class="t" style="left:857px;top:504px;font-size:11px;color:#000;transform:scaleX(0.9550);transform-origin:0 0;">display-in-tube-list</div>
<div class="t" style="left:669px;top:521px;font-size:11px;color:#000;transform:scaleX(0.9550);transform-origin:0 0;">Type (User Defined Attribute)</div>
<div class="t" style="left:857px;top:521px;font-size:11px;color:#000;transform:scaleX(0.9550);transform-origin:0 0;">user-attribute[<span style="position:relative;top:-3px">~</span>DKIType]</div>
<div style="position:absolute;left:649px;top:518px;width:2px;height:16px;background:#fff;"></div>
<div style="position:absolute;left:651px;top:518px;width:12px;height:14px;border:1px solid #f00;background:#fff;"></div>
<div style="position:absolute;left:651px;top:518px;width:14px;height:16px;line-height:16px;text-align:center;font-size:14px;color:#f00;white-space:nowrap;">6</div>
<div class="t" style="left:669px;top:538px;font-size:11px;color:#000;transform:scaleX(0.9550);transform-origin:0 0;">Cross-Section (User Defined Attribute)</div>
<div class="t" style="left:857px;top:538px;font-size:11px;color:#000;transform:scaleX(0.9550);transform-origin:0 0;">user-attribute[<span style="position:relative;top:-3px">~</span>DKITubeCrossSection]</div>
<div style="position:absolute;left:649px;top:534px;width:2px;height:17px;background:#fff;"></div>
<div style="position:absolute;left:651px;top:534px;width:12px;height:15px;border:1px solid #f00;background:#fff;"></div>
<div style="position:absolute;left:651px;top:535px;width:14px;height:16px;line-height:16px;text-align:center;font-size:14px;color:#f00;white-space:nowrap;">7</div>
<div class="t" style="left:669px;top:555px;font-size:11px;color:#000;transform:scaleX(0.9550);transform-origin:0 0;">Length (User Defined Attribute)</div>
<div class="t" style="left:857px;top:555px;font-size:11px;color:#000;transform:scaleX(0.9550);transform-origin:0 0;">user-attribute[<span style="position:relative;top:-3px">~</span>DKITubeLength]</div>
<div style="position:absolute;left:649px;top:551px;width:2px;height:17px;background:#fff;"></div>
<div style="position:absolute;left:651px;top:551px;width:12px;height:15px;border:1px solid #f00;background:#fff;"></div>
<div style="position:absolute;left:651px;top:552px;width:14px;height:16px;line-height:16px;text-align:center;font-size:14px;color:#f00;white-space:nowrap;">8</div>
<div class="t" style="left:669px;top:572px;font-size:11px;color:#000;transform:scaleX(0.9550);transform-origin:0 0;">Display in Wiring Lists</div>
<div class="t" style="left:857px;top:572px;font-size:11px;color:#000;transform:scaleX(0.9550);transform-origin:0 0;">display-in-wire-list</div>
<div class="t" style="left:669px;top:589px;font-size:11px;color:#000;transform:scaleX(0.9550);transform-origin:0 0;">Cable</div>
<div class="t" style="left:857px;top:589px;font-size:11px;color:#000;transform:scaleX(0.9550);transform-origin:0 0;">cable</div>
<div class="t" style="left:669px;top:606px;font-size:11px;color:#000;transform:scaleX(0.9550);transform-origin:0 0;">Wiring</div>
<div class="t" style="left:857px;top:606px;font-size:11px;color:#000;transform:scaleX(0.9550);transform-origin:0 0;">wiring</div>
<div class="t" style="left:669px;top:623px;font-size:11px;color:#000;transform:scaleX(0.9550);transform-origin:0 0;">Number of Wires</div>
<div class="t" style="left:857px;top:623px;font-size:11px;color:#000;transform:scaleX(0.9550);transform-origin:0 0;">wire-count</div>
<div class="t" style="left:669px;top:640px;font-size:11px;color:#000;transform:scaleX(0.9550);transform-origin:0 0;">Used Wires</div>
<div class="t" style="left:857px;top:640px;font-size:11px;color:#000;transform:scaleX(0.9550);transform-origin:0 0;">used-wire-count</div>
<div class="t" style="left:669px;top:657px;font-size:11px;color:#000;transform:scaleX(0.9550);transform-origin:0 0;">Cable Map</div>
<div class="t" style="left:857px;top:657px;font-size:11px;color:#000;transform:scaleX(0.9550);transform-origin:0 0;">cable-map</div>
<div style="position:absolute;left:661px;top:703px;width:11px;height:11px;border:1px solid #333;background:#fff;"></div>
<div class="t" style="left:680px;top:704px;font-size:11px;color:#000;transform:scaleX(0.9550);transform-origin:0 0;">Hide already used columns</div>
<div style="position:absolute;left:661px;top:726px;width:11px;height:11px;border:1px solid #333;background:#fff;"></div>
<svg style="position:absolute;left:661px;top:726px" width="13" height="13"><polyline points="2.2,6.2 5,9 10.8,3.2" fill="none" stroke="#333" stroke-width="1.2"/></svg>
<div class="t" style="left:680px;top:727px;font-size:11px;color:#000;transform:scaleX(0.9550);transform-origin:0 0;">Show variable</div>
<div style="position:absolute;left:655px;top:756px;width:175px;height:19px;border:1px solid #adadad;background:#e1e1e1;"></div>
<div class="t" style="left:655px;top:761px;font-size:11px;color:#000;width:177px;text-align:center;transform:scaleX(0.9550);transform-origin:50% 0;">Save as new template...</div>
</body></html>
